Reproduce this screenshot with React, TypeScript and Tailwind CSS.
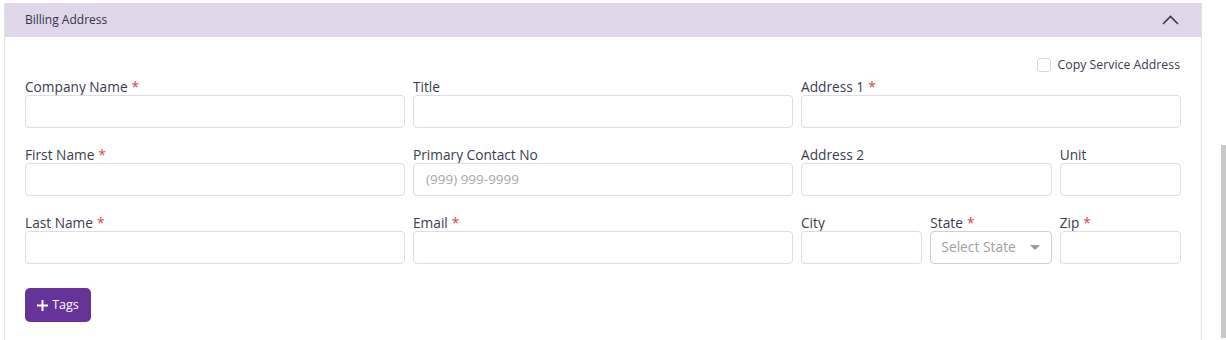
import React from "react";

const font = { fontFamily: '"Open Sans", "Noto Sans", sans-serif' };

function Label({ text, req }: { text: string; req?: boolean }) {
  return (
    <div className="h-[17px] leading-[17px] text-[13.7px] text-[#3b3b4f] whitespace-nowrap">
      {text}
      {req && <span className="text-[#d9434f] ml-[4px]">*</span>}
    </div>
  );
}

function Field({ text, req, placeholder }: { text: string; req?: boolean; placeholder?: string }) {
  return (
    <div className="flex flex-col min-w-0">
      <Label text={text} req={req} />
      <div className="h-[33px] border border-[#dedede] rounded-[4px] bg-white flex items-center px-[12px] text-[13.5px] text-[#a8a8a8]">
        {placeholder}
      </div>
    </div>
  );
}

function SelectField() {
  return (
    <div className="flex flex-col min-w-0">
      <Label text="State" req />
      <div className="h-[33px] border border-[#cfcfcf] rounded-[4px] bg-white flex items-center justify-between pl-[10px] pr-[11px] text-[13.8px] text-[#a0a0a0]">
        <span className="whitespace-nowrap">Select State</span>
        <svg width="10" height="6" viewBox="0 0 10 6">
          <path d="M0 0 L10 0 L5 5 Z" fill="#9a9a9a" />
        </svg>
      </div>
    </div>
  );
}

export default function App() {
  return (
    <div className="w-[1226px] h-[340px] bg-white relative overflow-hidden" style={font}>
      <div className="absolute right-0 top-[145px] w-[5px] h-[193px] bg-[#c8c8c8]" />
      <div className="ml-[4px] mt-[3px] w-[1198px] h-[337px] border-x border-[#e3e3e3]">
        <div className="h-[34px] bg-[#e0d6ea] flex items-center justify-between pl-[20px] pr-[22px]">
          <span className="text-[12px] text-[#33334a]">Billing Address</span>
          <svg width="17" height="10" viewBox="0 0 17 10" fill="none">
            <path d="M1 9 L8.5 1.5 L16 9" stroke="#3a3a55" strokeWidth="1.6" />
          </svg>
        </div>
        <div className="px-[20px]">
          <div className="flex justify-end items-center h-[20px] mt-[18px] mb-[3px] pr-[1px]">
            <div className="w-[14px] h-[14px] border border-[#d6d6d6] rounded-[3px] mr-[7px]" />
            <span className="text-[12.3px] text-[#3b3b4f]">Copy Service Address</span>
          </div>
          <div className="grid grid-cols-3 gap-x-[8px] gap-y-[18px]">
            <Field text="Company Name" req />
            <Field text="Title" />
            <Field text="Address 1" req />
            <Field text="First Name" req />
            <Field text="Primary Contact No" placeholder="(999) 999-9999" />
            <div className="grid grid-cols-3 gap-x-[8px]">
              <div className="col-span-2">
                <Field text="Address 2" />
              </div>
              <Field text="Unit" />
            </div>
            <Field text="Last Name" req />
            <Field text="Email" req />
            <div className="grid grid-cols-3 gap-x-[8px]">
              <Field text="City" />
              <SelectField />
              <Field text="Zip" req />
            </div>
          </div>
          <button className="mt-[24px] w-[66px] h-[34px] rounded-[5px] bg-[#663399] text-white text-[12.5px] flex items-center justify-center gap-[4px]">
            <svg width="11" height="11" viewBox="0 0 11 11">
              <path d="M5.5 0 V11 M0 5.5 H11" stroke="white" strokeWidth="2" />
            </svg>
            <span>Tags</span>
          </button>
        </div>
      </div>
    </div>
  );
}
